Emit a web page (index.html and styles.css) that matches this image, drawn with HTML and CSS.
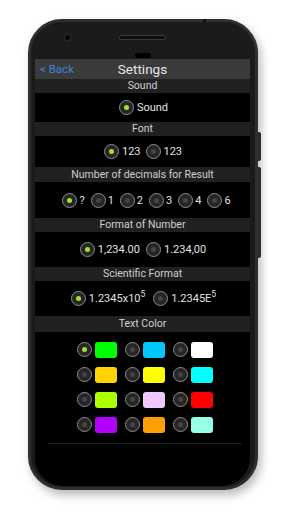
FILE: index.html
```html
<!DOCTYPE html>
<html>
<head>
<meta charset="utf-8">
<link rel="stylesheet" href="styles.css">
</head>
<body>
<div class="stage">
  <div class="phone">
    <span class="btn btn-a"></span>
    <span class="btn btn-b"></span>
    <span class="notch-top"></span>
    <div class="bezel">
      <span class="camera"></span>
      <span class="speaker"></span>
      <span class="sensor"></span>
    </div>
    <div class="screen">
      <div class="topbar">
        <span class="back">&lt; Back</span>
        <span class="title">Settings</span>
      </div>

      <div class="head">Sound</div>
      <div class="row r-sound">
        <label class="opt"><span class="radio on"></span><span>Sound</span></label>
      </div>

      <div class="head">Font</div>
      <div class="row r-font">
        <label class="opt"><span class="radio on"></span><span>123</span></label>
        <label class="opt"><span class="radio"></span><span>123</span></label>
      </div>

      <div class="head h-dec">Number of decimals for Result</div>
      <div class="row r-dec">
        <label class="opt"><span class="radio on"></span><span>?</span></label>
        <label class="opt"><span class="radio"></span><span>1</span></label>
        <label class="opt"><span class="radio"></span><span>2</span></label>
        <label class="opt"><span class="radio"></span><span>3</span></label>
        <label class="opt"><span class="radio"></span><span>4</span></label>
        <label class="opt"><span class="radio"></span><span>6</span></label>
      </div>

      <div class="head">Format of Number</div>
      <div class="row r-fmt">
        <label class="opt"><span class="radio on"></span><span>1,234.00</span></label>
        <label class="opt"><span class="radio"></span><span>1.234,00</span></label>
      </div>

      <div class="head">Scientific Format</div>
      <div class="row r-sci">
        <label class="opt"><span class="radio on"></span><span>1.2345x10<sup>5</sup></span></label>
        <label class="opt"><span class="radio"></span><span>1.2345E<sup>5</sup></span></label>
      </div>

      <div class="head h-col">Text Color</div>
      <div class="colors">
        <label class="copt"><span class="radio on"></span><span class="sw c-lime"></span></label>
        <label class="copt"><span class="radio"></span><span class="sw c-sky"></span></label>
        <label class="copt"><span class="radio"></span><span class="sw c-white"></span></label>
        <label class="copt"><span class="radio"></span><span class="sw c-gold"></span></label>
        <label class="copt"><span class="radio"></span><span class="sw c-yellow"></span></label>
        <label class="copt"><span class="radio"></span><span class="sw c-cyan"></span></label>
        <label class="copt"><span class="radio"></span><span class="sw c-chart"></span></label>
        <label class="copt"><span class="radio"></span><span class="sw c-lav"></span></label>
        <label class="copt"><span class="radio"></span><span class="sw c-red"></span></label>
        <label class="copt"><span class="radio"></span><span class="sw c-purple"></span></label>
        <label class="copt"><span class="radio"></span><span class="sw c-orange"></span></label>
        <label class="copt"><span class="radio"></span><span class="sw c-aqua"></span></label>
      </div>
      <div class="divider"></div>
    </div>
  </div>
</div>
</body>
</html>
```

FILE: styles.css
```css
html, body {
  margin: 0;
  padding: 0;
  background: #ffffff;
  font-family: Roboto, "Liberation Sans", sans-serif;
}

.stage {
  width: 288px;
  height: 512px;
  padding: 19px 0 0 28px;
  box-sizing: border-box;
}

.phone {
  position: relative;
  width: 230px;
  height: 471px;
  box-sizing: border-box;
  border: 3px solid #2f2f2f;
  border-radius: 34px;
  background: #1b1b1b;
  box-shadow: 3px 5px 10px rgba(0, 0, 0, 0.28);
  display: flex;
  flex-direction: column;
}

.btn {
  position: absolute;
  right: -6px;
  width: 3px;
  background: #2a2a2a;
  border-radius: 0 2px 2px 0;
}
.btn-a { top: 110px; height: 29px; }
.btn-b { top: 145px; height: 91px; }

.notch-top {
  position: absolute;
  top: -3px;
  left: 172px;
  width: 3px;
  height: 3px;
  background: #111;
}

.bezel {
  position: relative;
  height: 37px;
  flex: none;
}
.camera {
  position: absolute;
  left: 34px;
  top: 13px;
  width: 5px;
  height: 5px;
  border-radius: 50%;
  background: #050505;
  box-shadow: 0 0 0 1px #2a2a2a;
}
.speaker {
  position: absolute;
  left: 89px;
  top: 14px;
  width: 45px;
  height: 3px;
  border-radius: 2px;
  background: #0c0c0c;
  box-shadow: 0 0 0 1px #3a3a3a;
}
.sensor {
  position: absolute;
  left: 104px;
  top: 31px;
  width: 16px;
  height: 5px;
  border-radius: 3px;
  background: #000;
}

.screen {
  flex: 1;
  margin: 0 5px 1px 4px;
  background: #000;
  border-radius: 0 0 28px 28px;
  color: #dcdcdc;
  display: flex;
  flex-direction: column;
}

.topbar {
  position: relative;
  height: 20px;
  background: #3b3b3b;
  display: flex;
  align-items: center;
  justify-content: center;
}
.back {
  position: absolute;
  left: 5px;
  top: 3px;
  font-size: 11.5px;
  color: #3f82d6;
}
.title {
  font-size: 13.5px;
  color: #e6e6e6;
}

.head {
  height: 14px;
  line-height: 14px;
  background: #212121;
  text-align: center;
  font-size: 10.5px;
  color: #cfcfcf;
}
.h-dec { height: 15px; line-height: 15px; }
.h-col { height: 16px; line-height: 16px; }

.row {
  display: flex;
  justify-content: center;
  align-items: center;
  font-size: 11px;
  color: #e0e0e0;
}
.r-sound { height: 29px; padding-left: 2px; }
.r-font { height: 31px; gap: 5px; padding-left: 1px; }
.r-dec { height: 36px; gap: 6px; padding-left: 8px; }
.r-fmt { height: 35px; gap: 6px; padding-left: 1px; }
.r-sci { height: 35px; gap: 8px; padding-left: 2px; }

.opt {
  display: flex;
  align-items: center;
  gap: 3px;
}
.r-dec .opt { gap: 2px; }

sup {
  font-size: 8.5px;
  vertical-align: 5px;
  line-height: 0;
}

.radio {
  position: relative;
  width: 13px;
  height: 13px;
  border-radius: 50%;
  border: 1px solid #8c8c8c;
  background: #262626;
  flex: none;
}
.radio::after {
  content: "";
  position: absolute;
  left: 4px;
  top: 4px;
  width: 5px;
  height: 5px;
  border-radius: 50%;
  background: #444;
}
.radio.on::after {
  background: #a4e22a;
}

.colors {
  display: grid;
  grid-template-columns: repeat(3, 40px);
  grid-auto-rows: 25px;
  column-gap: 8px;
  justify-content: center;
  align-items: center;
  padding: 5px 0 0 4px;
}
.copt {
  display: flex;
  align-items: center;
  gap: 3px;
}
.sw {
  width: 22px;
  height: 16px;
  border-radius: 3px;
}
.c-lime { background: #00ff00; }
.c-sky { background: #00c8ff; }
.c-white { background: #ffffff; }
.c-gold { background: #ffd200; }
.c-yellow { background: #ffff00; }
.c-cyan { background: #00ffff; }
.c-chart { background: #aaff00; }
.c-lav { background: #f0c8ff; }
.c-red { background: #ff0000; }
.c-purple { background: #b400ff; }
.c-orange { background: #ffa000; }
.c-aqua { background: #96ffe6; }

.divider {
  margin: 6px 8px 0 13px;
  height: 1px;
  background: #1c1c1c;
}
```
